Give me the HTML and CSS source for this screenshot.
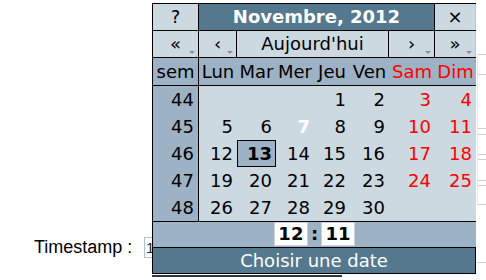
FILE: index.html
```html
<!DOCTYPE html>
<html lang="fr">
<head>
<meta charset="utf-8">
<title>Timestamp</title>
<link rel="stylesheet" href="styles.css">
</head>
<body>
<div class="page">
  <div class="main">
    <div class="field">
      <label class="label" for="ts">Timestamp :</label>
      <input class="input" id="ts" type="text" value="1352808660">
    </div>
    <div class="rule"></div>
  </div>
  <div class="side">
    <div class="tbl">
      <div class="tr r20"></div>
      <div class="tr r54"></div>
      <div class="tr r6"></div>
      <div class="tr r20"></div>
      <div class="tr r5"></div>
      <div class="tr r21"></div>
      <div class="tr r5"></div>
      <div class="tr r20 last"></div>
    </div>
    <div class="side-line"></div>
  </div>
</div>

<div class="cal">
  <div class="row head">
    <div class="btn">?</div>
    <div class="title">Novembre, 2012</div>
    <div class="btn end">×</div>
  </div>
  <div class="row head">
    <div class="btn nav">«</div>
    <div class="btn nav">‹</div>
    <div class="btn today">Aujourd'hui</div>
    <div class="btn nav">›</div>
    <div class="btn nav end">»</div>
  </div>
  <div class="row days">
    <div class="wk">sem</div>
    <div class="dn">Lun</div>
    <div class="dn">Mar</div>
    <div class="dn">Mer</div>
    <div class="dn">Jeu</div>
    <div class="dn">Ven</div>
    <div class="dn we">Sam</div>
    <div class="dn we">Dim</div>
  </div>
  <div class="body">
    <div class="row week">
      <div class="wn">44</div>
      <div class="d"></div><div class="d"></div><div class="d"></div>
      <div class="d">1</div><div class="d">2</div><div class="d we">3</div><div class="d we">4</div>
    </div>
    <div class="row week">
      <div class="wn">45</div>
      <div class="d">5</div><div class="d">6</div><div class="d now">7</div>
      <div class="d">8</div><div class="d">9</div><div class="d we">10</div><div class="d we">11</div>
    </div>
    <div class="row week">
      <div class="wn">46</div>
      <div class="d">12</div><div class="d sel">13</div><div class="d">14</div>
      <div class="d">15</div><div class="d">16</div><div class="d we">17</div><div class="d we">18</div>
    </div>
    <div class="row week">
      <div class="wn">47</div>
      <div class="d">19</div><div class="d">20</div><div class="d">21</div>
      <div class="d">22</div><div class="d">23</div><div class="d we">24</div><div class="d we">25</div>
    </div>
    <div class="row week">
      <div class="wn">48</div>
      <div class="d">26</div><div class="d">27</div><div class="d">28</div>
      <div class="d">29</div><div class="d">30</div><div class="d we"></div><div class="d we"></div>
    </div>
  </div>
  <div class="time">
    <span class="hm">12</span><span class="colon">:</span><span class="hm">11</span>
  </div>
  <div class="choose">Choisir une date</div>
</div>
</body>
</html>
```

FILE: styles.css
```css
html, body {
  margin: 0;
  padding: 0;
  background: #ffffff;
}

.page {
  display: grid;
  grid-template-columns: 477px 9px;
  width: 486px;
  height: 280px;
  overflow: hidden;
}

.main {
  padding-top: 237px;
}

.field {
  display: flex;
  align-items: center;
  padding-left: 34px;
  gap: 9px;
}

.label {
  font: 18px "Liberation Sans", Arial, sans-serif;
  color: #000;
  width: 101px;
}

.input {
  box-sizing: border-box;
  width: 200px;
  height: 21px;
  margin: 0;
  padding: 0 0 0 1px;
  border: 1px solid #b4c0cc;
  font: 15px "Liberation Sans", Arial, sans-serif;
  color: #222;
  background: #fff;
}

.rule {
  margin-top: 17px;
  margin-left: 152px;
  width: 190px;
  height: 2px;
  background: #2c3940;
}

.side {
  padding-top: 54px;
}

.tbl {
  border-left: 1px solid #e6eaee;
}

.tr {
  box-sizing: border-box;
  border-top: 1px solid #cbd3da;
}

.tr.last {
  border-bottom: 1px solid #cbd3da;
}

.r20 { height: 20px; }
.r54 { height: 54px; }
.r6 { height: 6px; }
.r5 { height: 5px; }
.r21 { height: 21px; }

.side-line {
  margin-top: 57px;
  height: 1px;
  background: #cbd3da;
}

/* Calendar popup */
.cal {
  position: absolute;
  left: 152px;
  top: 3px;
  width: 323px;
  border-top: 1px solid #000;
  border-left: 1px solid #000;
  background: #cdd9e1;
  font: 18px "DejaVu Sans", Verdana, sans-serif;
  color: #000;
}

.row {
  display: grid;
  grid-template-columns: 46px 38px 39px 38px 36px 39px 46px 41px;
}

.head {
  box-sizing: border-box;
  height: 27px;
  border-bottom: 1px solid #000;
}

.btn {
  position: relative;
  box-sizing: border-box;
  border-right: 1px solid #000;
  background: #cdd9e1;
  text-align: center;
  line-height: 26px;
}

.btn.end {
  border-right: 1px solid #b8c6d0;
}

.title {
  grid-column: span 6;
  box-sizing: border-box;
  border-right: 1px solid #000;
  background: #54788e;
  color: #fff;
  font-weight: bold;
  text-align: center;
  line-height: 26px;
}

.today {
  grid-column: span 4;
}

.nav::after {
  content: "";
  position: absolute;
  right: 3px;
  bottom: 3px;
  border-left: 3px solid transparent;
  border-right: 3px solid transparent;
  border-top: 3px solid #8a8f94;
}

.days {
  box-sizing: border-box;
  height: 28px;
  border-bottom: 1px solid #000;
  background: #9db2c4;
  line-height: 27px;
}

.wk {
  box-sizing: border-box;
  border-right: 1px solid #000;
  text-align: center;
}

.dn {
  text-align: center;
  white-space: nowrap;
}

.we {
  color: #ff0000;
}

.body {
  border-bottom: 1px solid #000;
}

.week {
  height: 27px;
  line-height: 27px;
}

.wn {
  box-sizing: border-box;
  border-right: 1px solid #000;
  background: #9db2c4;
  text-align: right;
  padding-right: 4px;
}

.d {
  box-sizing: border-box;
  text-align: right;
  padding-right: 4px;
}

.now {
  color: #ffffff;
  font-weight: bold;
}

.sel {
  border: 1px solid #000;
  background: #9db2c4;
  font-weight: bold;
  line-height: 25px;
  padding-right: 3px;
}

.time {
  display: flex;
  justify-content: center;
  align-items: flex-start;
  gap: 3px;
  height: 25px;
  background: #9db2c4;
}

.hm {
  box-sizing: border-box;
  width: 34px;
  height: 24px;
  border: 1px solid #c9d2da;
  background: #ffffff;
  font-weight: bold;
  text-align: center;
  line-height: 22px;
}

.colon {
  font-weight: bold;
  line-height: 24px;
}

.choose {
  box-sizing: border-box;
  height: 27px;
  border: 1px solid #000;
  border-left: 0;
  background: #54788e;
  color: #ffffff;
  text-align: center;
  line-height: 25px;
}
```
